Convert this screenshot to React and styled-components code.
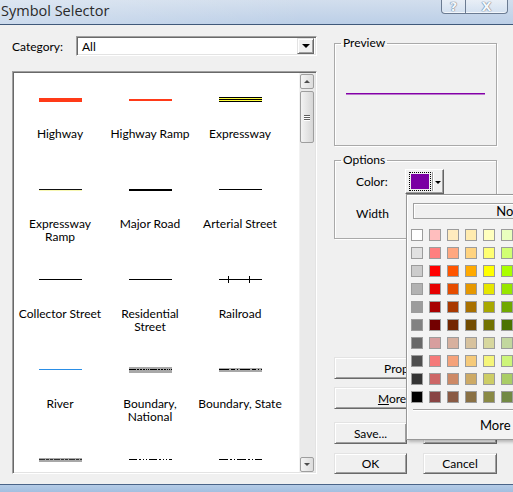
import styled, { createGlobalStyle } from "styled-components";

const GlobalStyle = createGlobalStyle`
  html, body {
    margin: 0;
    padding: 0;
    overflow: hidden;
  }
  body {
    font-family: Lato, "Noto Sans", sans-serif;
    font-size: 12px;
    color: #000;
    background: #f0f0f0;
  }
`;

const Window = styled.div`
  position: relative;
  width: 513px;
  height: 492px;
  display: flex;
  flex-direction: column;
  overflow: hidden;
  background: #f0f0f0;
`;

const TitleBar = styled.div`
  flex: none;
  height: 24px;
  display: flex;
  justify-content: space-between;
  align-items: flex-start;
  background: linear-gradient(to right, rgba(255, 255, 255, 0.25), rgba(255, 255, 255, 0) 60%),
    linear-gradient(to bottom, #d2deed, #bccfe7);
  border-bottom: 1px solid #40597a;
`;

const Title = styled.div`
  font-family: "Open Sans", "Noto Sans", sans-serif;
  font-size: 14.5px;
  line-height: 18px;
  padding: 2px 0 0 1px;
  color: #2a2a2a;
`;

const CaptionButtons = styled.div`
  display: flex;
  margin-right: 5px;
`;

const CaptionButton = styled.div`
  width: ${(p) => p.$w}px;
  height: 14px;
  box-sizing: border-box;
  display: flex;
  align-items: flex-end;
  justify-content: center;
  border: 1px solid #6b7b92;
  border-top: none;
  border-left-width: ${(p) => (p.$first ? 1 : 0)}px;
  border-radius: ${(p) => (p.$first ? "0 0 0 4px" : "0 0 4px 0")};
  background: linear-gradient(to bottom, rgba(255, 255, 255, 0.5), rgba(220, 232, 245, 0.6));
  box-shadow: inset 0 -1px 0 rgba(255, 255, 255, 0.7);
  font-family: "DejaVu Sans", sans-serif;
  font-weight: bold;
  font-size: 13px;
  line-height: 13px;
  color: #f4f7fb;
  text-shadow: 0 0 1px #56657c, 0 0 1px #56657c;
`;

const Body = styled.div`
  flex: 1;
  display: flex;
  gap: 17px;
  padding: 11px 16px 10px 12px;
  min-height: 0;
`;

const LeftColumn = styled.div`
  width: 305px;
  display: flex;
  flex-direction: column;
`;

const CategoryRow = styled.div`
  height: 20px;
  display: flex;
  align-items: center;
`;

const FieldLabel = styled.span`
  width: ${(p) => p.$w || "auto"};
  flex: none;
`;

const Combo = styled.div`
  flex: 1;
  height: 20px;
  box-sizing: border-box;
  display: flex;
  align-items: center;
  background: #fff;
  border: 1px solid;
  border-color: #a0a0a0 #fff #fff #a0a0a0;
  box-shadow: inset 1px 1px 0 #696969, inset -1px -1px 0 #e3e3e3;
`;

const ComboText = styled.span`
  flex: 1;
  padding-left: 5px;
`;

const ComboArrow = styled.div`
  width: 17px;
  height: 16px;
  margin-right: 2px;
  display: flex;
  align-items: center;
  justify-content: center;
  background: #f0f0f0;
  box-sizing: border-box;
  border: 1px solid;
  border-color: #e3e3e3 #696969 #696969 #e3e3e3;
  box-shadow: inset 1px 1px 0 #fff, inset -1px -1px 0 #a0a0a0;
`;

const Triangle = styled.span`
  width: 0;
  height: 0;
  border-left: ${(p) => p.$s || 4}px solid transparent;
  border-right: ${(p) => p.$s || 4}px solid transparent;
  border-top: ${(p) => p.$s || 4}px solid ${(p) => p.$c || "#000"};
`;

const SymbolList = styled.div`
  flex: 1;
  margin-top: 15px;
  display: flex;
  min-height: 0;
  background: #fff;
  border: 1px solid;
  border-color: #a0a0a0 #fff #fff #a0a0a0;
  box-shadow: inset 1px 1px 0 #696969, inset -1px -1px 0 #e3e3e3;
  padding: 1px;
`;

const SymbolGrid = styled.div`
  flex: 1;
  overflow: hidden;
  display: grid;
  grid-template-columns: repeat(3, 90px);
  grid-auto-rows: 90px;
  align-content: start;
  padding-left: 1px;
`;

const SymbolItem = styled.div`
  display: flex;
  flex-direction: column;
  align-items: center;
  padding-top: 22px;
`;

const SymbolLabel = styled.div`
  margin-top: 23px;
  line-height: 13px;
  text-align: center;
  white-space: pre-line;
`;

const ScrollBar = styled.div`
  width: 16px;
  display: flex;
  flex-direction: column;
  background: #eaeaea;
  border-left: 1px solid #f2f2f2;
  box-sizing: border-box;
  padding: 1px 1px 0 0;
`;

const ScrollArrow = styled.div`
  height: 15px;
  box-sizing: border-box;
  display: flex;
  align-items: center;
  justify-content: center;
  border: 1px solid #9e9e9e;
  border-radius: 2px;
  background: linear-gradient(to right, #f4f4f4, #dcdcdc);
`;

const ScrollArrowUp = styled.span`
  width: 0;
  height: 0;
  border-left: 3px solid transparent;
  border-right: 3px solid transparent;
  border-bottom: 3px solid #4d4d4d;
`;

const ScrollThumb = styled.div`
  height: 52px;
  margin-top: 2px;
  box-sizing: border-box;
  display: flex;
  flex-direction: column;
  align-items: center;
  justify-content: center;
  gap: 1px;
  border: 1px solid #9e9e9e;
  border-radius: 2px;
  background: linear-gradient(to right, #f3f3f3, #d6d6d6);
`;

const Grip = styled.span`
  width: 6px;
  height: 1px;
  background: #5f5f5f;
  box-shadow: 0 1px 0 #fff;
`;

const Spacer = styled.div`
  flex: 1;
`;

const RightColumn = styled.div`
  width: 163px;
  display: flex;
  flex-direction: column;
`;

const GroupBox = styled.fieldset`
  margin: ${(p) => p.$mt || 0}px 0 0 0;
  padding: 0;
  height: ${(p) => p.$h}px;
  box-sizing: border-box;
  border: 1px solid #a9a9a9;
  box-shadow: 1px 1px 0 #fff, inset 1px 1px 0 #fff;
  min-width: 0;
`;

const GroupTitle = styled.legend`
  margin-left: 6px;
  padding: 0 2px;
  line-height: 14px;
`;

const PreviewArea = styled.div`
  display: flex;
  justify-content: center;
  padding-top: 43px;
`;

const OptionsBody = styled.div`
  padding: 2px 0 0 21px;
  display: flex;
  flex-direction: column;
`;

const OptionRow = styled.div`
  display: flex;
  align-items: center;
  height: ${(p) => p.$h}px;
  margin-top: ${(p) => p.$mt || 0}px;
`;

const ColorButton = styled.div`
  width: 39px;
  height: 25px;
  box-sizing: border-box;
  display: flex;
  align-items: center;
  background: #f0f0f0;
  border: 1px solid;
  border-color: #fff #646464 #646464 #fff;
  box-shadow: inset -1px -1px 0 #a0a0a0;
  padding-left: 3px;
`;

const ColorSwatchFocus = styled.div`
  width: 22px;
  height: 19px;
  box-sizing: border-box;
  border: 1px dotted #000;
  padding: 1px;
  display: flex;
`;

const ColorFill = styled.div`
  flex: 1;
  background: ${(p) => p.$c};
`;

const ColorDivider = styled.div`
  width: 1px;
  height: 19px;
  margin-left: 1px;
  background: #a0a0a0;
  box-shadow: 1px 0 0 #fff;
`;

const ColorArrow = styled.div`
  flex: 1;
  display: flex;
  justify-content: center;
  padding-top: 2px;
`;

const ButtonStack = styled.div`
  margin-top: auto;
  display: flex;
  flex-direction: column;
`;

const ButtonPair = styled.div`
  display: grid;
  grid-template-columns: 73px 74px;
  column-gap: 16px;
  margin-top: ${(p) => p.$mt || 0}px;
`;

const Button = styled.div`
  height: ${(p) => p.$h || 22}px;
  margin-top: ${(p) => p.$mt || 0}px;
  box-sizing: border-box;
  display: flex;
  align-items: center;
  justify-content: center;
  background: #f0f0f0;
  border: 1px solid;
  border-color: #e3e3e3 #696969 #696969 #e3e3e3;
  box-shadow: inset 1px 1px 0 #fff, inset -1px -1px 0 #a0a0a0;
  u {
    text-decoration: underline;
  }
`;

const BottomFrame = styled.div`
  flex: none;
  height: 7px;
  border-top: 1px solid #4a6488;
  background: linear-gradient(to bottom, #b4cbe6, #a3bfe0);
`;

const ColorPopup = styled.div`
  position: absolute;
  left: 406px;
  top: 194px;
  width: 236px;
  height: 246px;
  box-sizing: border-box;
  background: #f3f3f3;
  border: 1px solid #979797;
  box-shadow: inset 1px 1px 0 #fff, 2px 2px 3px rgba(0, 0, 0, 0.25);
  padding: 8px 0 0 4px;
  display: flex;
  flex-direction: column;
`;

const NoColorButton = styled.div`
  margin-left: 2px;
  width: 218px;
  height: 16px;
  box-sizing: border-box;
  border: 1px solid #a0a0a0;
  background: #f0f0f0;
  box-shadow: inset 1px 1px 0 #fff;
  display: flex;
  align-items: center;
  justify-content: center;
  font-size: 13px;
`;

const PaletteGrid = styled.div`
  margin-top: 10px;
  display: grid;
  grid-template-columns: repeat(6, 12px);
  grid-auto-rows: 12px;
  column-gap: 6px;
  row-gap: 6px;
`;

const PaletteSwatch = styled.div`
  box-sizing: border-box;
  border: 1px solid #9c9c9c;
  background: ${(p) => p.$c};
`;

const PopupSeparator = styled.div`
  margin: 6px 0 0 2px;
  height: 1px;
  background: #a0a0a0;
  box-shadow: 0 1px 0 #fff;
`;

const MoreColors = styled.div`
  margin: 8px 0 0 69px;
  display: flex;
  align-items: center;
  gap: 4px;
  font-size: 13px;
  line-height: 14px;
`;

const palette = [
  ["#ffffff", "#ffbebe", "#ffebbe", "#ffebaf", "#ffffbe", "#e9ffbe"],
  ["#e1e1e1", "#ff7f7f", "#ffa77f", "#ffd37f", "#ffff73", "#d1ff73"],
  ["#cccccc", "#ff0000", "#ff5500", "#ffaa00", "#ffff00", "#aaff00"],
  ["#b2b2b2", "#e60000", "#e64c00", "#e69800", "#e6e600", "#98e600"],
  ["#9c9c9c", "#a80000", "#a83800", "#a87000", "#a8a800", "#70a800"],
  ["#828282", "#730000", "#732600", "#734c00", "#737300", "#4c7300"],
  ["#686868", "#d79e9e", "#d7b09e", "#d7c29e", "#d7d79e", "#c2d79e"],
  ["#4e4e4e", "#f57a7a", "#f5a27a", "#f5ca7a", "#f5f57a", "#cdf57a"],
  ["#343434", "#cd6666", "#cd8966", "#cdaa66", "#cdcd66", "#aacd66"],
  ["#000000", "#894444", "#895a44", "#897044", "#898944", "#728944"],
];

const symbols = [
  { kind: "highway", label: "Highway" },
  { kind: "highwayRamp", label: "Highway Ramp" },
  { kind: "expressway", label: "Expressway" },
  { kind: "expresswayRamp", label: "Expressway\nRamp" },
  { kind: "majorRoad", label: "Major Road" },
  { kind: "thin", label: "Arterial Street" },
  { kind: "thin", label: "Collector Street" },
  { kind: "thin", label: "Residential\nStreet" },
  { kind: "railroad", label: "Railroad" },
  { kind: "river", label: "River" },
  { kind: "national", label: "Boundary,\nNational" },
  { kind: "state", label: "Boundary, State" },
  { kind: "county" },
  { kind: "dashDotDot" },
  { kind: "dashDot" },
];

function LineSymbol({ kind }) {
  let body = null;
  switch (kind) {
    case "highway":
      body = <rect x="0" y="2.5" width="43" height="4" fill="#ff3a18" />;
      break;
    case "highwayRamp":
      body = <rect x="0" y="3.5" width="43" height="2" fill="#ff3a18" />;
      break;
    case "expressway":
      body = (
        <>
          <rect x="0" y="2" width="43" height="5" fill="#000" />
          <rect x="0" y="3" width="43" height="1" fill="#ffff40" />
          <rect x="0" y="5" width="43" height="1" fill="#ffff40" />
        </>
      );
      break;
    case "expresswayRamp":
      body = (
        <>
          <rect x="0" y="4" width="43" height="1" fill="#111" />
          <rect x="0" y="5" width="43" height="1" fill="#e6e600" opacity="0.3" />
        </>
      );
      break;
    case "majorRoad":
      body = <rect x="0" y="3.5" width="43" height="2" fill="#000" />;
      break;
    case "thin":
      body = <rect x="0" y="4" width="43" height="1" fill="#000" />;
      break;
    case "railroad":
      body = (
        <>
          <rect x="0" y="4" width="43" height="1" fill="#000" />
          <rect x="9" y="1" width="1" height="7" fill="#000" />
          <rect x="30" y="1" width="1" height="7" fill="#000" />
        </>
      );
      break;
    case "river":
      body = <rect x="0" y="4" width="43" height="1" fill="#2a8ee6" />;
      break;
    case "national":
      body = (
        <>
          <rect x="0" y="1.5" width="43" height="6" fill="#a8a8a8" />
          <line x1="0" y1="4.5" x2="43" y2="4.5" stroke="#000" strokeWidth="1.5" strokeDasharray="7 1 2 1 2 1 2 1 1 1 1 1" />
        </>
      );
      break;
    case "state":
      body = (
        <>
          <rect x="0" y="2.5" width="43" height="4" fill="#a8a8a8" />
          <line x1="0" y1="4.5" x2="43" y2="4.5" stroke="#000" strokeWidth="1.5" strokeDasharray="10 2 4 2 1 2" />
        </>
      );
      break;
    case "county":
      body = (
        <>
          <rect x="0" y="2.5" width="43" height="4" fill="#a8a8a8" />
          <line x1="0" y1="4.5" x2="43" y2="4.5" stroke="#333" strokeWidth="1.5" strokeDasharray="6 1 3 1 3 1" />
        </>
      );
      break;
    case "dashDotDot":
      body = <line x1="0" y1="4.5" x2="43" y2="4.5" stroke="#000" strokeWidth="1.5" strokeDasharray="8 2 2 2 1 2 1 2" />;
      break;
    case "dashDot":
      body = <line x1="0" y1="4.5" x2="43" y2="4.5" stroke="#000" strokeWidth="1.5" strokeDasharray="9 2 2 2 1 2" />;
      break;
    default:
      break;
  }
  return (
    <svg width="43" height="9" viewBox="0 0 43 9" shapeRendering="crispEdges">
      {body}
    </svg>
  );
}

function ColorWheelIcon() {
  return (
    <svg width="10" height="10" viewBox="0 0 10 10">
      <circle cx="5" cy="5" r="4" fill="#f7c948" />
      <path d="M5 1 A4 4 0 0 1 9 5 L5 5 Z" fill="#f08a24" />
    </svg>
  );
}

export default function App() {
  return (
    <>
      <GlobalStyle />
      <Window>
        <TitleBar>
          <Title>Symbol Selector</Title>
          <CaptionButtons>
            <CaptionButton $w={25} $first>?</CaptionButton>
            <CaptionButton $w={42}>X</CaptionButton>
          </CaptionButtons>
        </TitleBar>

        <Body>
          <LeftColumn>
            <CategoryRow>
              <FieldLabel $w="64px">Category:</FieldLabel>
              <Combo>
                <ComboText>All</ComboText>
                <ComboArrow>
                  <Triangle />
                </ComboArrow>
              </Combo>
            </CategoryRow>

            <SymbolList>
              <SymbolGrid>
                {symbols.map((s, i) => (
                  <SymbolItem key={i}>
                    <LineSymbol kind={s.kind} />
                    {s.label && <SymbolLabel>{s.label}</SymbolLabel>}
                  </SymbolItem>
                ))}
              </SymbolGrid>
              <ScrollBar>
                <ScrollArrow>
                  <ScrollArrowUp />
                </ScrollArrow>
                <ScrollThumb>
                  <Grip />
                  <Grip />
                  <Grip />
                </ScrollThumb>
                <Spacer />
                <ScrollArrow>
                  <Triangle $s={3} $c="#4d4d4d" />
                </ScrollArrow>
              </ScrollBar>
            </SymbolList>
          </LeftColumn>

          <RightColumn>
            <GroupBox $h={110}>
              <GroupTitle>Preview</GroupTitle>
              <PreviewArea>
                <svg width="139" height="2" viewBox="0 0 139 2">
                  <rect x="0" y="0" width="139" height="1.5" fill="#8400a8" />
                </svg>
              </PreviewArea>
            </GroupBox>

            <GroupBox $h={86} $mt={7}>
              <GroupTitle>Options</GroupTitle>
              <OptionsBody>
                <OptionRow $h={25}>
                  <FieldLabel $w="49px">Color:</FieldLabel>
                  <ColorButton>
                    <ColorSwatchFocus>
                      <ColorFill $c="#7a00a3" />
                    </ColorSwatchFocus>
                    <ColorDivider />
                    <ColorArrow>
                      <Triangle $s={3} />
                    </ColorArrow>
                  </ColorButton>
                </OptionRow>
                <OptionRow $h={14} $mt={12}>
                  <FieldLabel>Width</FieldLabel>
                </OptionRow>
              </OptionsBody>
            </GroupBox>

            <ButtonStack>
              <Button>Properties...</Button>
              <Button $mt={8}>
                <span>
                  <u>M</u>ore Symbols
                </span>
              </Button>
              <ButtonPair $mt={13}>
                <Button>Save...</Button>
                <Button>Reset</Button>
              </ButtonPair>
              <ButtonPair $mt={9}>
                <Button $h={21}>OK</Button>
                <Button $h={21}>Cancel</Button>
              </ButtonPair>
            </ButtonStack>
          </RightColumn>
        </Body>

        <BottomFrame />

        <ColorPopup>
          <NoColorButton>No Color</NoColorButton>
          <PaletteGrid>
            {palette.flat().map((c, i) => (
              <PaletteSwatch key={i} $c={c} />
            ))}
          </PaletteGrid>
          <PopupSeparator />
          <MoreColors>
            More
            <ColorWheelIcon />
          </MoreColors>
        </ColorPopup>
      </Window>
    </>
  );
}
